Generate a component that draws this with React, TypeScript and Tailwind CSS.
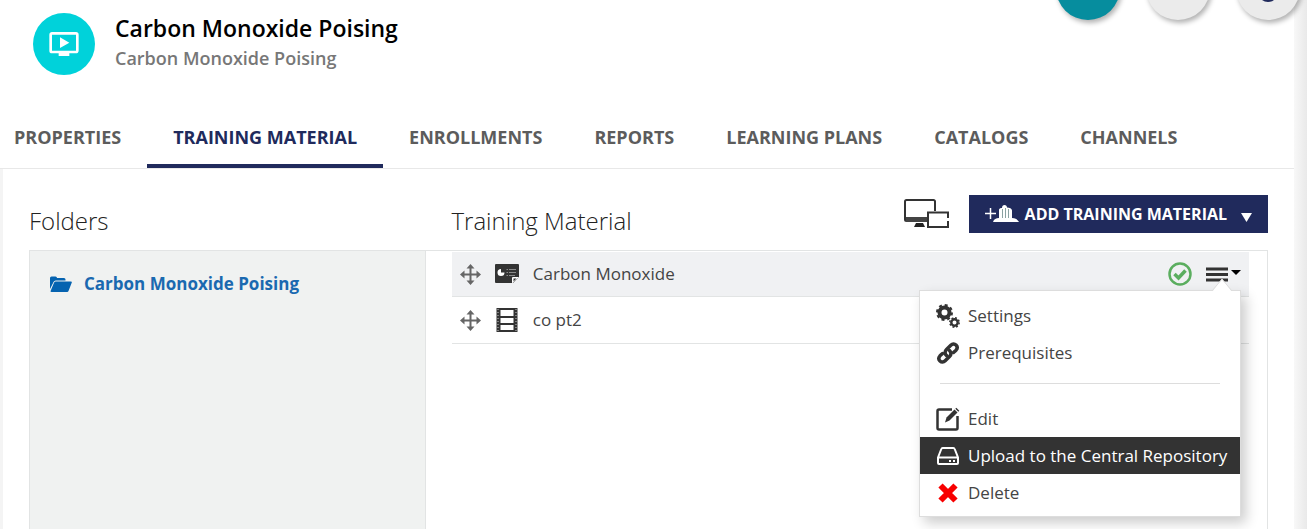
import React from 'react'
import { MdOndemandVideo } from 'react-icons/md'

const tabs = [
  'PROPERTIES',
  'TRAINING MATERIAL',
  'ENROLLMENTS',
  'REPORTS',
  'LEARNING PLANS',
  'CATALOGS',
  'CHANNELS',
]

const MoveIcon = () => (
  <svg width="21" height="21" viewBox="0 0 21 21" fill="#666">
    <path d="M10.500 2v17M2 10.500h17" stroke="#666" strokeWidth="2" />
    <path d="M10.500 0l4 4.500h-8zM10.500 21l4-4.500h-8zM0 10.500l4.500-4v8zM21 10.500l-4.500-4v8z" />
  </svg>
)

const SlidesIcon = () => (
  <svg width="24" height="20" viewBox="0 0 24 20">
    <path d="M1 0h22a1 1 0 0 1 1 1v12l-6 6H1a1 1 0 0 1-1-1V1a1 1 0 0 1 1-1z" fill="#333" />
    <path d="M17 19.500V14a1 1 0 0 1 1-1h6z" fill="#fff" />
    <path d="M18.500 17.500v-3h3z" fill="#333" />
    <path d="M6 5v3.500h3.500A3.500 3.500 0 1 1 6 5z" fill="#fff" />
    <path d="M11.500 5.500h1.500m1 0h7M11.500 8.500h1.500m1 0h7M11.500 11.500h1.500m1 0h6" stroke="#8a8a8a" />
  </svg>
)

const FilmIcon = () => (
  <svg width="22" height="24" viewBox="0 0 22 24" fill="none">
    <path d="M2.500 0v24M19.500 0v24" stroke="#333" strokeWidth="4" />
    <path d="M2 1v23M20 1v23" stroke="#ccc" strokeDasharray="1 2" />
    <path d="M4 1h14M4 9h14M4 16h14M4 23h14" stroke="#333" strokeWidth="2" />
  </svg>
)

const FolderIcon = () => (
  <svg width="22" height="16" viewBox="0 0 22 16" fill="#0563b0">
    <path d="M0 13V2a1.500 1.500 0 0 1 1.500-1.500h4A1.500 1.500 0 0 1 7 2h7a1.500 1.500 0 0 1 1.500 1.500v1H6A2.500 2.500 0 0 0 3.500 6z" />
    <path d="M6 5.500h15a.8.8 0 0 1 .8 1L18.500 15a1.500 1.500 0 0 1-1.300 1H1.500a.9.9 0 0 1-.8-1.300L4 6.700a2 2 0 0 1 2-1.200z" />
  </svg>
)

const DevicesIcon = () => (
  <svg width="45" height="30" viewBox="0 0 45 30" fill="none" stroke="#333">
    <path d="M23 22H2.500a1.500 1.500 0 0 1-1.500-1.500V2.500A1.500 1.500 0 0 1 2.500 1h27A1.500 1.500 0 0 1 31 2.500V12" strokeWidth="2" />
    <path d="M2 20.500h21" strokeWidth="5" stroke="#444" />
    <path d="M12 24h7l2 4H10z" fill="#222" stroke="none" />
    <path d="M44 19v-5.500H24V28h20v-6" strokeWidth="2" />
  </svg>
)

const AddMaterialIcon = () => (
  <svg width="34" height="18" viewBox="0 0 34 18" fill="#fff">
    <path d="M0 8.500h11M5.500 3v11" stroke="#fff" strokeWidth="1.500" />
    <path d="M8 17c1-3 3-4 6-4V5c0-1.500 1.500-2 3-2 0-2 1-3 2.500-3S22 1 22 2.500c2.500 0 5 1 5 3V13c4 0 6 2 7 4z" />
    <path d="M17.500 4v9M20.500 3v10M23.500 4v9" stroke="#6d8a8a" strokeWidth=".8" />
  </svg>
)

const CheckIcon = () => (
  <svg width="24" height="24" viewBox="0 0 24 24" fill="none" stroke="#5bae5f">
    <circle cx="12" cy="12" r="10.500" strokeWidth="2.500" />
    <path d="M6.500 12l4 4 7-7.500" strokeWidth="3.500" />
  </svg>
)

const GearsIcon = () => (
  <svg width="24" height="24" viewBox="0 0 24 24" fill="none" stroke="#333">
    <circle cx="8.500" cy="8.500" r="5" strokeWidth="4" />
    <circle cx="8.500" cy="8.500" r="7.500" strokeWidth="2" strokeDasharray="3 2.890" />
    <circle cx="18.500" cy="18.500" r="3.200" strokeWidth="2.400" />
    <circle cx="18.500" cy="18.500" r="4.700" strokeWidth="1.500" strokeDasharray="1.900 1.791" />
  </svg>
)

const LinkIcon = () => (
  <svg width="24" height="24" viewBox="0 0 24 24" fill="none" stroke="#333" strokeWidth="3.500" strokeLinecap="round">
    <path d="M10.500 14.500c-2-2-2-4 0-6l4.300-4.300c1.700-1.700 3.700-1.700 5.200-.2s1.500 3.500 0 5.200L17.500 11.500" />
    <path d="M13.500 9.500c2 2 2 4 0 6l-4.300 4.300c-1.700 1.700-3.700 1.700-5.200.2s-1.500-3.500 0-5.200L6.500 12.500" />
  </svg>
)

const EditIcon = () => (
  <svg width="24" height="24" viewBox="0 0 24 24" fill="none" stroke="#333">
    <path d="M16 2.500H3A1.500 1.500 0 0 0 1.500 4v17A1.500 1.500 0 0 0 3 22.500h17a1.500 1.500 0 0 0 1.500-1.500V9" strokeWidth="2.500" />
    <path d="M9 15.500l1.500-5 8-8 3 3-8 8z" fill="#333" stroke="none" />
    <path d="M19.300 1.700l1-1 3 3-1 1z" fill="#333" stroke="none" />
  </svg>
)

const DriveIcon = () => (
  <svg width="22" height="18" viewBox="0 0 22 18" fill="none" stroke="#fff" strokeWidth="2">
    <path d="M1 10.500L4.300 2a1.500 1.500 0 0 1 1.400-1h10.600a1.500 1.500 0 0 1 1.400 1L21 10.500V16a1 1 0 0 1-1 1H2a1 1 0 0 1-1-1zM1 10.500h20" />
    <path d="M12 14h2M16 14h2" />
  </svg>
)

const DeleteIcon = () => (
  <svg width="20" height="20" viewBox="0 0 20 20">
    <path d="M2.500 2.500l15 15M17.500 2.500l-15 15" stroke="#f80000" strokeWidth="6" />
  </svg>
)

type MenuItemProps = {
  icon: React.ReactNode
  label: string
  active?: boolean
}

const MenuItem: React.FC<MenuItemProps> = ({ icon, label, active }) => (
  <li>
    <button
      className={`flex h-[37px] w-full items-center gap-2 pl-4 text-left ${
        active ? 'bg-[#333] text-white' : 'text-[#444]'
      }`}
    >
      <span className="flex w-6 justify-center">{icon}</span>
      {label}
    </button>
  </li>
)

const ActionsMenu = () => (
  <div className="absolute top-[38px] right-2 z-10 w-[322px] border border-[#ddd] bg-white pt-1.5 pb-[5px] shadow-[5px_6px_12px_rgba(0,0,0,0.2)]">
    <svg className="absolute -top-3 right-2" width="20" height="13" viewBox="0 0 20 13">
      <path d="M0 13L10 0l10 13z" fill="#fff" />
      <path d="M0 12L10 0l10 12" fill="none" stroke="#ddd" />
    </svg>
    <ul>
      <MenuItem icon={<GearsIcon />} label="Settings" />
      <MenuItem icon={<LinkIcon />} label="Prerequisites" />
      <li className="mx-5 my-4 mt-3 h-px bg-[#ddd]" />
      <MenuItem icon={<EditIcon />} label="Edit" />
      <MenuItem icon={<DriveIcon />} label="Upload to the Central Repository" active />
      <MenuItem icon={<DeleteIcon />} label="Delete" />
    </ul>
  </div>
)

const Header = () => (
  <header className="relative flex h-[106px] items-start gap-5 pt-[13px] pl-[33px]">
    <div className="flex size-[62px] items-center justify-center rounded-full bg-[#00d2da]">
      <MdOndemandVideo size={32} color="#fff" />
    </div>
    <div>
      <h1 className="text-[23px] leading-[30px] font-semibold text-black">Carbon Monoxide Poising</h1>
      <p className="text-[18px] leading-[30px] font-semibold text-[#777]">Carbon Monoxide Poising</p>
    </div>
    <div className="absolute -top-11 right-[7px] z-10 flex gap-[26px]">
      <button aria-label="Edit course" className="size-16 rounded-full bg-[#068d9e] shadow-[2px_3px_5px_rgba(0,0,0,0.3)]" />
      <button aria-label="Preview" className="size-16 rounded-full bg-[#ebebeb] shadow-[2px_3px_5px_rgba(0,0,0,0.3)]" />
      <button aria-label="Help" className="flex size-16 items-end justify-center rounded-full bg-[#ebebeb] pb-[18px] shadow-[2px_3px_5px_rgba(0,0,0,0.3)]">
        <span className="size-5 rounded-full bg-[#202a5c]" />
      </button>
    </div>
  </header>
)

const Tabs = () => (
  <nav className="flex h-[63px] border-b border-[#e8e8e8] text-[18px] leading-6 font-bold text-[#5c5c5c]">
    {tabs.map((tab) => (
      <a
        key={tab}
        href="#"
        className={`px-[26px] pt-[19px] first:pl-[14px] ${
          tab === 'TRAINING MATERIAL' ? 'border-b-4 border-[#202a5c] text-[#202a5c]' : ''
        }`}
      >
        {tab}
      </a>
    ))}
  </nav>
)

const App: React.FC = () => {
  return (
    <div className="relative h-screen overflow-hidden bg-white font-['Open_Sans',sans-serif] text-[17px] leading-6 text-[#444]">
      <Header />
      <Tabs />
      <main className="mr-[13px] flex h-full flex-col border-l-[3px] border-[#f4f4f4] px-[26px]">
        <div className="flex h-[81px] shrink-0 text-[#222]">
          <h2 className="w-[32%] pt-9 text-[24px] leading-8 font-light">Folders</h2>
          <div className="flex flex-1 items-start justify-between pl-[26px]">
            <h2 className="pt-9 text-[24px] leading-8 font-light">Training Material</h2>
            <div className="flex gap-5 pt-[26px]">
              <button aria-label="Device preview">
                <DevicesIcon />
              </button>
              <button className="flex h-[38px] items-center gap-1.5 bg-[#202a5c] px-4 text-[16px] font-bold text-white">
                <AddMaterialIcon />
                ADD TRAINING MATERIAL
                <svg className="mt-1.5 ml-2" width="11" height="9" viewBox="0 0 11 9">
                  <path d="M0 0h11L5.500 9z" fill="#fff" />
                </svg>
              </button>
            </div>
          </div>
        </div>
        <div className="flex flex-1 border border-[#e2e4e4]">
          <aside className="w-[32%] border-r border-[#e2e4e4] bg-[#f0f2f1] pt-[21px] pl-5">
            <a href="#" className="flex items-center gap-3 font-bold text-[#1a69b0]">
              <FolderIcon />
              Carbon Monoxide Poising
            </a>
          </aside>
          <section className="flex-1 pt-px pr-[18px] pl-[26px]">
            <ul>
              <li className="relative flex h-[45px] items-center border-b border-[#e2e4e4] bg-[#f0f1f3] pl-2">
                <MoveIcon />
                <span className="ml-3.5 flex w-6 justify-center">
                  <SlidesIcon />
                </span>
                <span className="ml-3.5 flex-1">Carbon Monoxide</span>
                <CheckIcon />
                <button aria-label="Actions" className="mr-2 ml-3.5 flex items-center gap-[3px]">
                  <svg width="22" height="15" viewBox="0 0 22 15">
                    <path d="M0 2h22M0 7.500h22M0 13h22" stroke="#333" strokeWidth="3" />
                  </svg>
                  <svg className="mb-1" width="10" height="5" viewBox="0 0 10 5">
                    <path d="M0 0h10L5 5z" fill="#000" />
                  </svg>
                </button>
                <ActionsMenu />
              </li>
              <li className="flex h-[47px] items-center border-b border-[#e2e4e4] pl-2">
                <MoveIcon />
                <span className="ml-3.5 flex w-6 justify-center">
                  <FilmIcon />
                </span>
                <span className="ml-3.5">co pt2</span>
              </li>
            </ul>
          </section>
        </div>
      </main>
      <div className="absolute top-0 right-0 h-full w-[13px] bg-linear-to-r from-[#f8f8f8] to-[#e9e9e9]" />
    </div>
  )
}

export default App
